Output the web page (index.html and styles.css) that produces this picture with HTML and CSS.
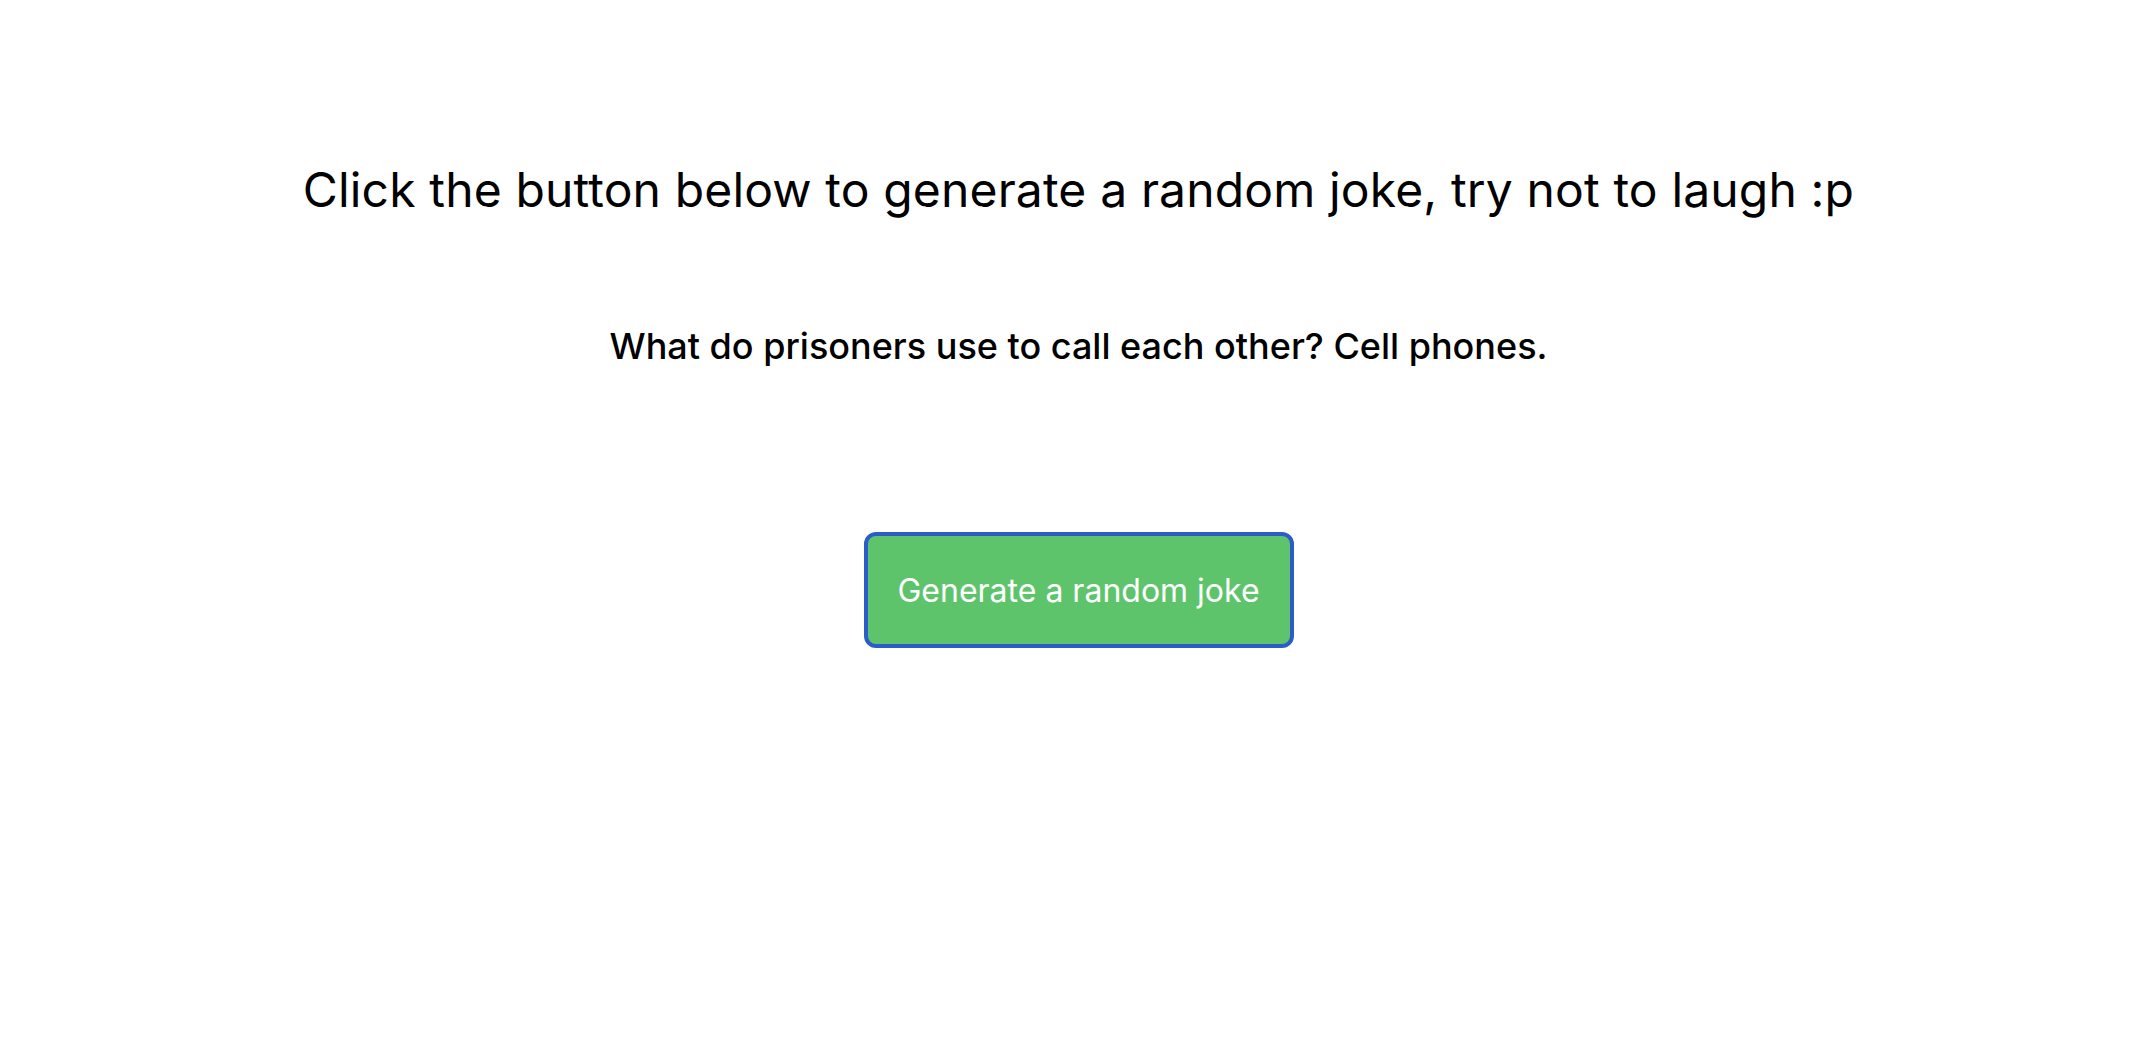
FILE: index.html
```html
<!DOCTYPE html>
<html lang="en">
<head>
<meta charset="utf-8">
<title>Random Joke</title>
<link rel="stylesheet" href="styles.css">
</head>
<body>
<main class="app">
  <h1 class="title">Click the button below to generate a random joke, try not to laugh :p</h1>
  <p class="joke">What do prisoners use to call each other? Cell phones.</p>
  <button class="btn" type="button">Generate a random joke</button>
</main>
</body>
</html>
```
FILE: styles.css
```css
html, body {
  margin: 0;
  padding: 0;
  background: #ffffff;
}
body {
  font-family: Inter, "Noto Sans", sans-serif;
  color: #000000;
}
.app {
  display: flex;
  flex-direction: column;
  align-items: center;
  padding-top: 160px;
  padding-left: 5px;
}
.title {
  margin: 0;
  font-size: 48px;
  font-weight: 400;
  line-height: 60px;
  letter-spacing: 0.15px;
}
.joke {
  margin: 104px 0 0;
  font-size: 36px;
  font-weight: 500;
  line-height: 44px;
}
.btn {
  margin-top: 164px;
  width: 430px;
  height: 116px;
  background: #5ec46b;
  border: 4px solid #2b5cc7;
  border-radius: 12px;
  color: #ffffff;
  font-family: Inter, "Noto Sans", sans-serif;
  font-size: 32px;
  font-weight: 400;
}
```
